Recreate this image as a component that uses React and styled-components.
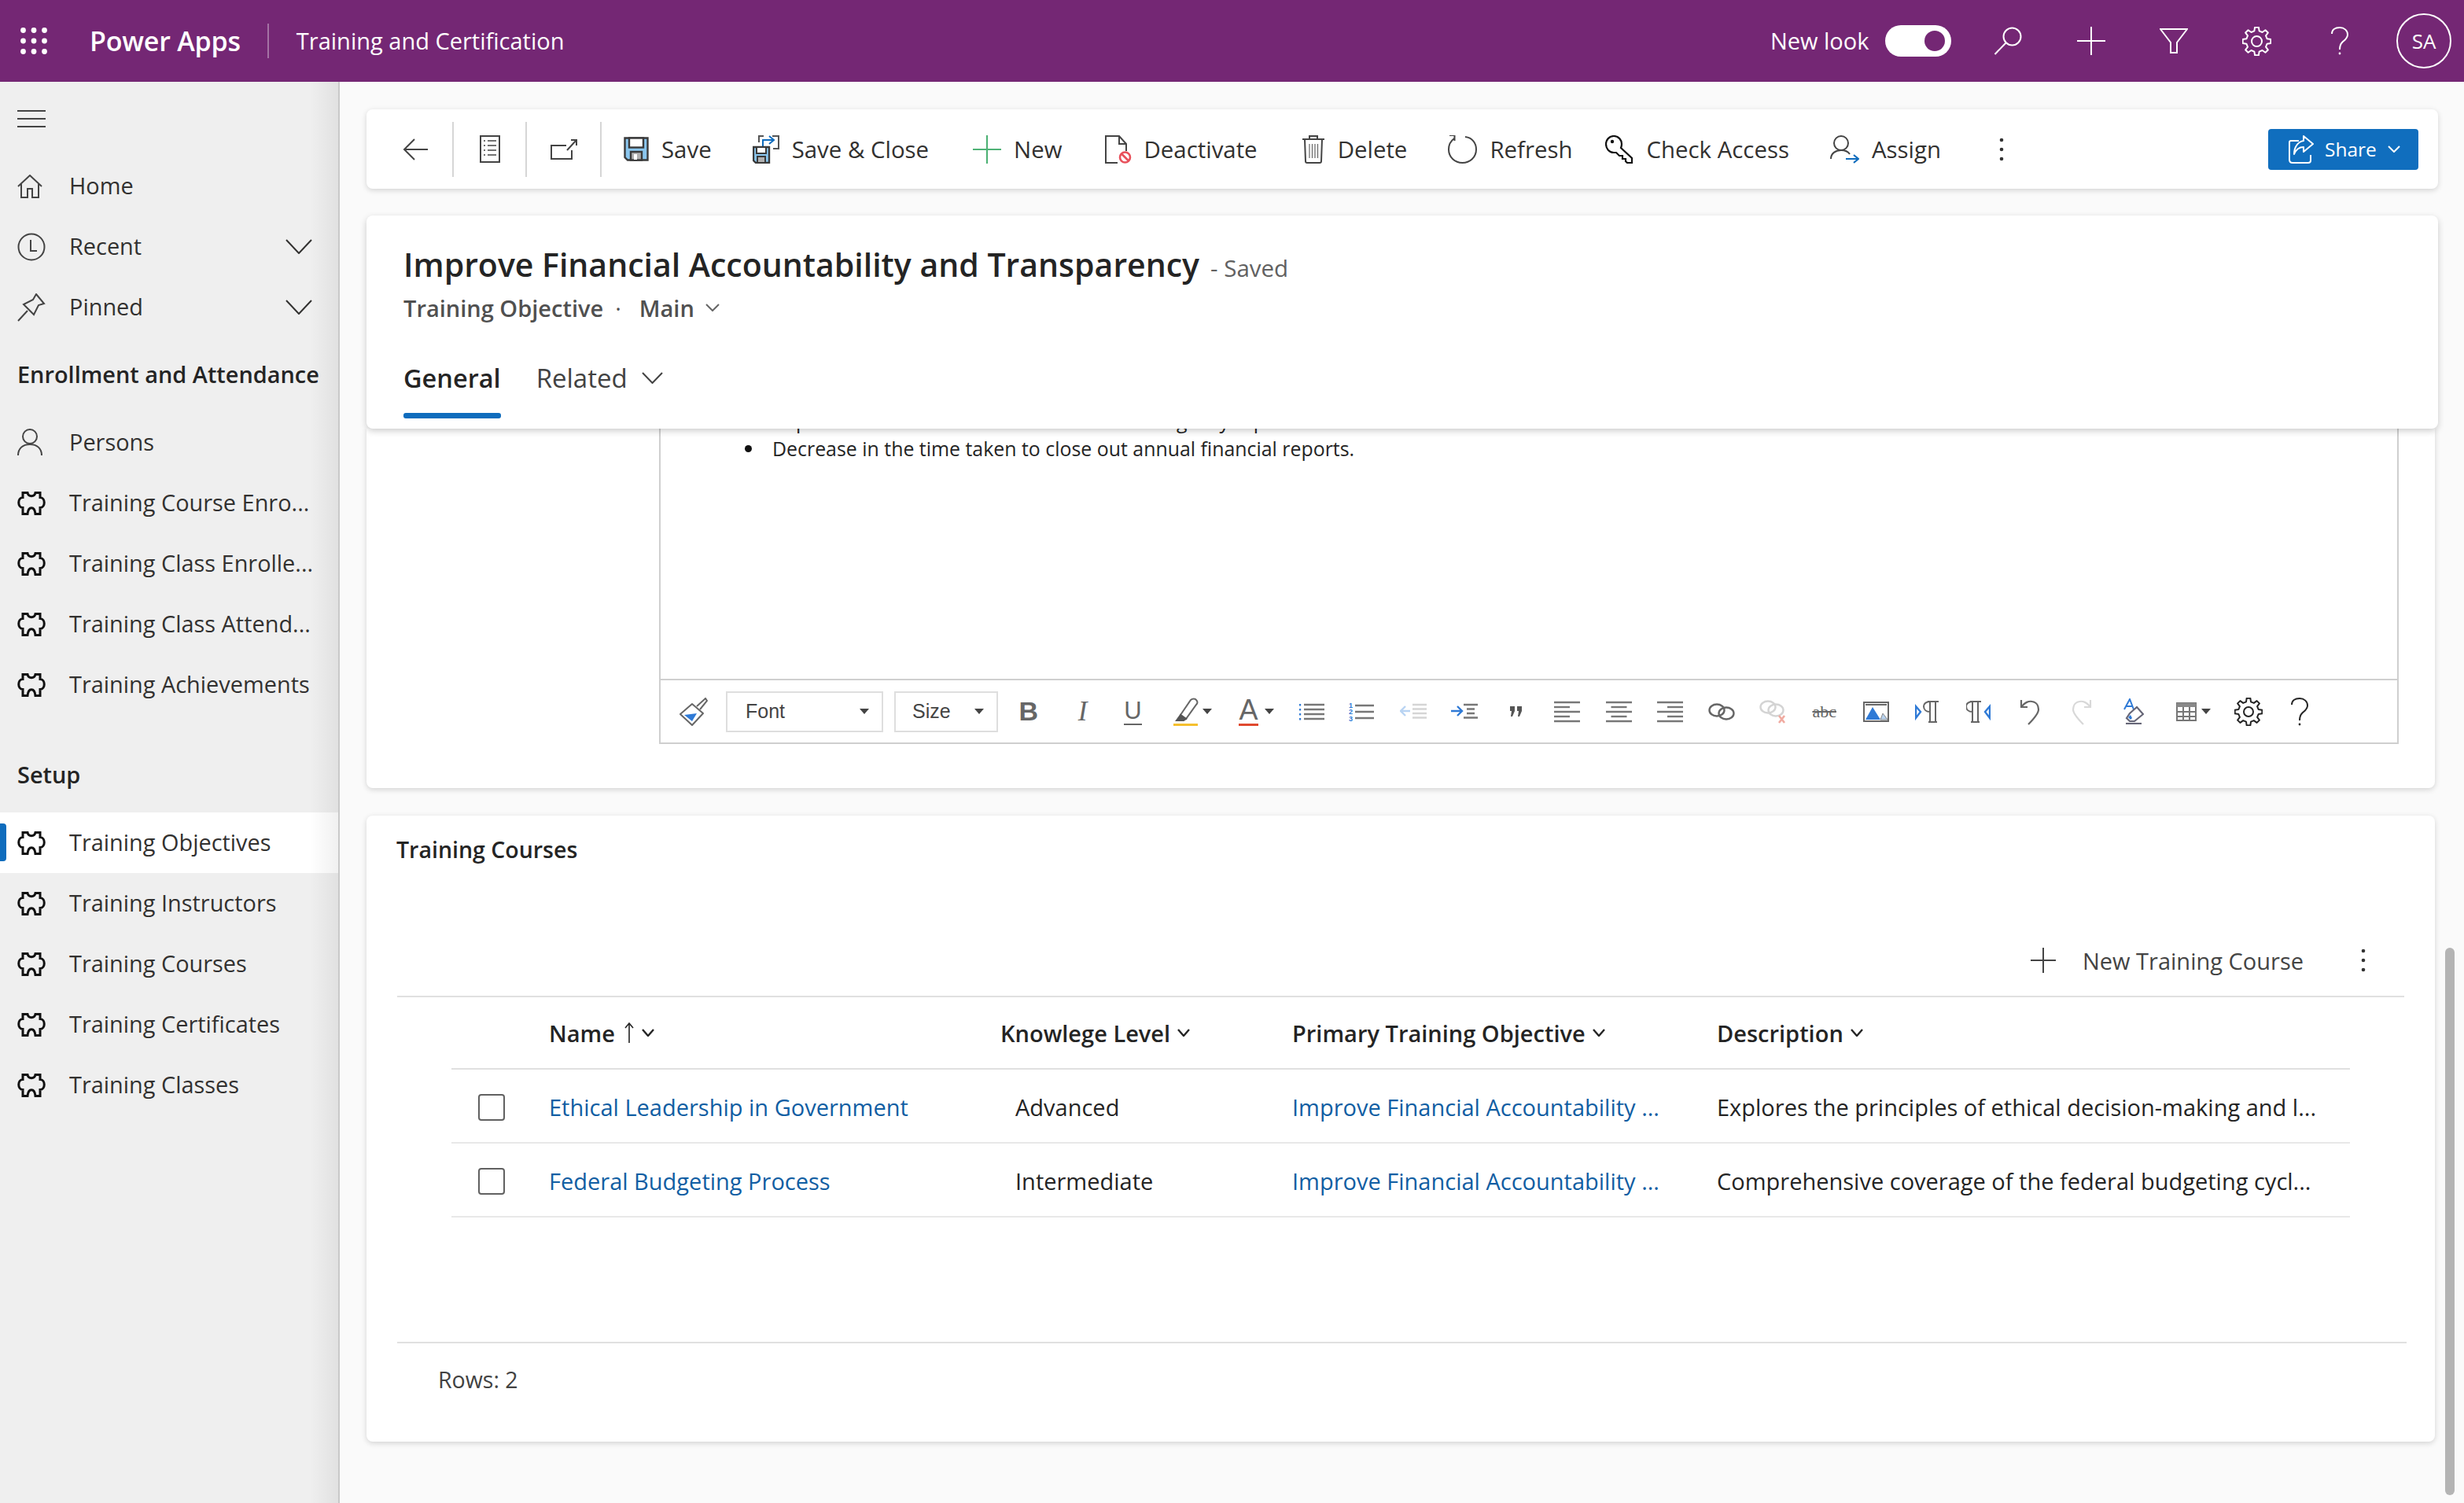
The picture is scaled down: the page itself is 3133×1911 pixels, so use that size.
import styled, { createGlobalStyle } from "styled-components";

const GlobalStyle = createGlobalStyle`
  html, body { margin: 0; padding: 0; height: 100%; }
  body {
    font-family: "Open Sans", "Noto Sans", Arial, sans-serif;
    background: #fafafa;
    color: #242424;
    overflow: hidden;
  }
  * { box-sizing: border-box; }
  #root { height: 100%; }
`;

const gearPath = (cx, cy, outer, inner, teeth) => {
  const step = (Math.PI * 2) / teeth;
  const pts = [];
  for (let i = 0; i < teeth; i++) {
    const a = i * step;
    [[inner, -0.3], [outer, -0.17], [outer, 0.17], [inner, 0.3]].forEach(([r, k]) => {
      pts.push(`${(cx + r * Math.cos(a + k * step)).toFixed(2)} ${(cy + r * Math.sin(a + k * step)).toFixed(2)}`);
    });
  }
  return `M${pts.join(" L")} Z`;
};

const Svg = ({ w, h, sw = 2, children }) => (
  <svg width={w} height={h} viewBox={`0 0 ${w} ${h}`} fill="none" stroke="currentColor" strokeWidth={sw} style={{ display: "block", flexShrink: 0 }}>
    {children}
  </svg>
);

const Waffle = () => (
  <svg width="34" height="34" viewBox="0 0 34 34" fill="#fff" style={{ display: "block" }}>
    {[3.5, 17, 30.5].map((y) => [3.5, 17, 30.5].map((x) => <circle key={`${x}-${y}`} cx={x} cy={y} r="3.4" />))}
  </svg>
);
const SearchIcon = () => <Svg w={36} h={36}><circle cx="23.5" cy="12.5" r="11" /><path d="M15.5 20.5 L1.5 35" /></Svg>;
const PlusIcon = ({ s = 36 }) => <Svg w={s} h={s}><path d={`M${s / 2} 0 V${s} M0 ${s / 2} H${s}`} /></Svg>;
const FilterIcon = () => <Svg w={36} h={32}><path d="M1 1 H35 L22 18 V31 H14 V18 Z" /></Svg>;
const GearIcon = ({ s = 37 }) => (
  <Svg w={s} h={s}>
    <path d={gearPath(s / 2, s / 2, s / 2 - 0.5, s / 2 - 5, 8)} strokeLinejoin="round" />
    <circle cx={s / 2} cy={s / 2} r={s / 2 - 12} />
  </Svg>
);
const HelpIcon = () => (
  <Svg w={24} h={36}>
    <path d="M2 9 C2 4 6 1 12 1 C18 1 22 5 22 10 C22 15 18 17 15 20 C13 22 12 24 12 29" />
    <circle cx="12" cy="34" r="1.4" fill="currentColor" stroke="none" />
  </Svg>
);

const Hamburger = () => <Svg w={36} h={22}><path d="M0 1 H36 M0 11 H36 M0 21 H36" /></Svg>;
const HomeIcon = () => <Svg w={32} h={30}><path d="M1 15 L16 1 L31 15 M5 12 V29 H13 V18 H19 V29 H27 V12" /></Svg>;
const ClockIcon = () => <Svg w={36} h={36}><circle cx="18" cy="18" r="16.5" /><path d="M17 9 V23 H25" /></Svg>;
const PinIcon = () => <Svg w={36} h={36}><path d="M24 1 L34 13 L27 15 L21 27 L8 14 L20 8 Z M13 22 L1 35" /></Svg>;
const Chevron = ({ w = 34, h = 19, sw = 2 }) => <Svg w={w} h={h} sw={sw}><path d={`M1 1 L${w / 2} ${h - 1} L${w - 1} 1`} /></Svg>;
const PersonIcon = () => <Svg w={32} h={35}><circle cx="16" cy="10" r="9" /><path d="M1 34 C1 25 7 20 16 20 C25 20 31 25 31 34" /></Svg>;
const PuzzleIcon = () => (
  <Svg w={36} h={30} sw={3}>
    <path d="M7 1.5 H13 C14 7 22 7 23 1.5 H29 V7.5 C36 7.5 36 20.5 29 20.5 V28.5 H23 C22 18 14 18 13 28.5 H7 V20.5 C0 20.5 0 7.5 7 7.5 Z" strokeLinejoin="miter" />
  </Svg>
);

const BackIcon = () => <Svg w={32} h={28}><path d="M15 1 L2 14 L15 27 M2 14 H32" /></Svg>;
const FormIcon = () => (
  <Svg w={26} h={35}>
    <rect x="1" y="1" width="24" height="33" />
    <path d="M5 7 H7 M10 7 H21 M5 13 H7 M10 13 H21 M5 19 H7 M10 19 H21 M5 25 H7 M10 25 H21" strokeWidth="1.5" />
  </Svg>
);
const PopoutIcon = () => <Svg w={34} h={26}><path d="M20 8 H1 V25 H27 V14 M21 14 L33 1 M26 1 H33 V8" /></Svg>;
const SaveIcon = () => (
  <Svg w={32} h={31} sw={2.4}>
    <path d="M1.5 1.5 H30.5 V29.5 H5 L1.5 26 Z" fill="#8ac6ee" stroke="#3a3a3a" />
    <rect x="7" y="1.5" width="18" height="12" fill="#fff" stroke="#3a3a3a" />
    <rect x="9" y="19" width="14" height="10.5" fill="#b0b0b0" stroke="#3a3a3a" />
    <rect x="13" y="22" width="4" height="7" fill="#fff" stroke="none" />
  </Svg>
);
const SaveCloseIcon = () => (
  <Svg w={34} h={36} sw={2}>
    <path d="M8 9 V1 H14 M25 1 H33 V17 H26" stroke="#555" />
    <path d="M13 14 V6 H26 M21 1 L27 6 L21 11" stroke="#0f6cbd" />
    <path d="M1 15 H21 V35 H4 L1 32 Z" fill="#8ac6ee" stroke="#3a3a3a" strokeWidth="2.4" />
    <rect x="5" y="15" width="12" height="8" fill="#fff" stroke="#3a3a3a" />
    <rect x="6" y="27" width="10" height="8" fill="#b0b0b0" stroke="#3a3a3a" />
  </Svg>
);
const NewIcon = () => <Svg w={36} h={36} sw={2.2}><path d="M18 0 V36 M0 18 H36" stroke="#4fb276" /></Svg>;
const DeactivateIcon = () => (
  <Svg w={34} h={36} sw={2}>
    <path d="M16 35 H1 V1 H18 L27 11 V20 M18 1 V11 H27" stroke="#444" />
    <circle cx="25.5" cy="28" r="6.5" stroke="#e8505b" strokeWidth="2.6" fill="#fff" />
    <path d="M21 23.5 L30 32.5" stroke="#e8505b" strokeWidth="2.6" />
  </Svg>
);
const DeleteIcon = () => (
  <Svg w={30} h={36} sw={2}>
    <path d="M1 5 H29 M10 5 V1 H20 V5 M4 5 L5 33 C5 34 6 35 7 35 H23 C24 35 25 34 25 33 L26 5" stroke="#444" />
    <path d="M10 11 V29 M13.5 11 V29 M17 11 V29 M20.5 11 V29" strokeWidth="1.2" stroke="#666" />
  </Svg>
);
const RefreshIcon = () => <Svg w={37} h={36}><path d="M22 2 C31 3 36 10 36 18 C36 28 28 35 18.5 35 C9 35 1 28 1 18 C1 12 4 7 8 4 M2 0 H8.5 V7" stroke="#444" /></Svg>;
const KeyIcon = () => (
  <Svg w={36} h={36} sw={2.2}>
    <path d="M11 1 C17 1 21 6 21 11 C21 13 20.5 15 20 16 L34 29 V35 H28 L26 33 V30 H22 V26 H18 L14 22 C13 22 12 22 11 22 C5 22 1 17 1 11 C1 6 5 1 11 1 Z" stroke="#111" />
    <circle cx="9" cy="8" r="2.2" fill="#111" stroke="none" />
  </Svg>
);
const AssignIcon = () => (
  <Svg w={37} h={36}>
    <circle cx="14" cy="10" r="9" stroke="#444" />
    <path d="M1 30 C1 23 7 19 14 19 C19 19 23 21 25 24" stroke="#444" />
    <path d="M20 30 H35 M30 25 L36 30 L30 35" stroke="#0f6cbd" strokeWidth="2.2" />
  </Svg>
);
const DotsIcon = () => (
  <svg width="6" height="30" viewBox="0 0 6 30" fill="#333" style={{ display: "block", flexShrink: 0 }}>
    <circle cx="3" cy="3" r="2.3" /><circle cx="3" cy="15" r="2.3" /><circle cx="3" cy="27" r="2.3" />
  </svg>
);
const ShareIcon = () => (
  <Svg w={32} h={36}>
    <path d="M13 7 H3 Q1 7 1 9 V31 Q1 35 5 35 H25 Q28 35 28 32 V25" />
    <path d="M19 1 L31 11 L19 21 V15 C13 15 9 19 7 24 C7 15 12 8 19 7 Z" strokeLinejoin="round" />
  </Svg>
);

const BrushIcon = () => (
  <Svg w={36} h={36} sw={2}>
    <path d="M22 11 L33 1 L35 4 L26 15" stroke="#666" />
    <path d="M16 8 L30 20 L16 35 L1 21 Z" fill="#fff" stroke="#666" strokeLinejoin="round" />
    <path d="M6 22 L22 20 L16 30 Z" fill="#2f7ad6" stroke="none" />
  </Svg>
);
const HighlightIcon = () => (
  <Svg w={32} h={36}>
    <path d="M9 22 L22 3 C24 1 28 1 29 3 C31 5 31 7 29 9 L16 27 Z" stroke="#666" />
    <path d="M9 22 L4 29 H13 L16 27 Z" fill="#555" stroke="#555" />
    <path d="M0 34.5 H31" stroke="#f5c02e" strokeWidth="3" />
  </Svg>
);
const Caret = styled.i`
  display: block;
  width: 0;
  height: 0;
  margin-left: ${(p) => p.$gap || 6}px;
  border-left: 6px solid transparent;
  border-right: 6px solid transparent;
  border-top: 7px solid #444;
`;
const LinesIcon = ({ align = "left", widths = [33, 20, 33, 20, 33], c = "#777", w = 33 }) => (
  <Svg w={w} h={28} sw={2.4}>
    {widths.map((lw, i) => {
      const x = align === "left" ? 0 : align === "right" ? w - lw : (w - lw) / 2;
      return <path key={i} d={`M${x} ${2 + i * 6} H${x + lw}`} stroke={c} />;
    })}
  </Svg>
);
const BulletIcon = () => (
  <Svg w={32} h={22} sw={2.4}>
    <path d="M6 2 H32 M6 8 H32 M6 14 H32 M6 20 H32" stroke="#777" />
    <path d="M1 1 V3.5 M1 7 V9.5 M1 13 V15.5 M1 19 V21.5" stroke="#2f7ad6" />
  </Svg>
);
const NumberIcon = () => (
  <Svg w={32} h={26} sw={2.4}>
    <path d="M8 5 H32 M8 13 H32 M8 21 H32" stroke="#777" />
    <g fill="#2f7ad6" stroke="none" fontSize="9" fontFamily="Liberation Sans, Arial, sans-serif" fontWeight="700">
      <text x="0" y="8">1</text>
      <text x="0" y="16">2</text>
      <text x="0" y="25">3</text>
    </g>
  </Svg>
);
const OutdentIcon = () => (
  <Svg w={34} h={21} sw={2.4}>
    <path d="M16 2 H34 M16 7.5 H34 M16 13 H34 M16 18.5 H34" stroke="#d5d5d5" />
    <path d="M1 10 H13 M7 4 L1 10 L7 16" stroke="#b9d4f3" />
  </Svg>
);
const IndentIcon = () => (
  <Svg w={34} h={21} sw={2.4}>
    <path d="M16 2 H34 M20 7.5 H30 M20 13 H30 M16 18.5 H34" stroke="#777" />
    <path d="M0 10 H13 M8 4 L14 10 L8 16" stroke="#2f7ad6" />
  </Svg>
);
const QuoteIcon = () => (
  <svg width="15" height="13" viewBox="0 0 15 13" fill="#555" style={{ display: "block" }}>
    <path d="M0 0 H6 V6 L3 13 H1 L2 6 H0 Z M9 0 H15 V6 L12 13 H10 L11 6 H9 Z" />
  </svg>
);
const LinkIcon = () => (
  <Svg w={34} h={22} sw={2.4}>
    <ellipse cx="11" cy="9" rx="9.5" ry="7.5" stroke="#666" />
    <ellipse cx="23" cy="13" rx="9.5" ry="7.5" stroke="#666" />
  </Svg>
);
const UnlinkIcon = () => (
  <Svg w={34} h={30} sw={2.4}>
    <ellipse cx="11" cy="9" rx="9.5" ry="7.5" stroke="#d4d4d4" />
    <ellipse cx="21" cy="13" rx="9.5" ry="7.5" stroke="#d4d4d4" />
    <path d="M25 20 L32 29 M32 20 L25 29" stroke="#f0aaa0" strokeWidth="2.6" />
  </Svg>
);
const ImageIcon = () => (
  <Svg w={33} h={26}>
    <rect x="1" y="1" width="31" height="24" stroke="#666" fill="#fff" />
    <path d="M3 23 L12 7 L22 23 Z" fill="#2f7ad6" stroke="none" />
    <path d="M22 23 L25 15 L31 23 Z" fill="#b8d3f0" stroke="#888" strokeWidth="1" />
    <path d="M3 4 H30" stroke="#666" />
  </Svg>
);
const PilcrowStem = ({ x }) => (
  <path transform={`translate(${x} 0)`} d="M8 1 H22 M11 1 V27 M18 1 V27 M9 27 H20 M11 14 C6 14 3 11 3 7 C3 4 6 1 11 1" stroke="#666" />
);
const PilcrowIcon = ({ rtl }) => (
  <Svg w={31} h={28}>
    {rtl ? <PilcrowStem x={-3} /> : <PilcrowStem x={8} />}
    <path d={rtl ? "M30 7 L24 14 L30 22 Z" : "M1 7 L7 14 L1 22 Z"} stroke="#2f7ad6" strokeWidth="2.4" />
  </Svg>
);
const UndoIcon = ({ c = "#666", flip }) => (
  <Svg w={26} h={34} sw={2.2}>
    <g transform={flip ? "translate(26 0) scale(-1 1)" : undefined}>
      <path d="M2 11 C6 5 12 3 16 4 C22 5 24 10 24 14 C24 20 16 28 11 33 M2 2 V11 H10" stroke={c} />
    </g>
  </Svg>
);
const EraserIcon = () => (
  <Svg w={28} h={33}>
    <path d="M3 14 L10 1 L15 14 M5 10 H13" stroke="#2f7ad6" />
    <path d="M10 19 L19 11 L27 20 L16 29 H10 L6 25 Z" stroke="#667" fill="#fff" strokeWidth="2.2" />
    <path d="M8 24 L11 21 L13 25 L11 27 Z" fill="#2f7ad6" stroke="none" />
    <path d="M5 32 H25" stroke="#667" strokeWidth="2.2" />
  </Svg>
);
const TableIcon = () => (
  <Svg w={26} h={24}>
    <rect x="1" y="1" width="24" height="22" stroke="#777" />
    <rect x="1" y="1" width="24" height="5" fill="#888" stroke="none" />
    <path d="M9 6 V23 M17 6 V23 M1 12 H25 M1 18 H25" stroke="#777" />
  </Svg>
);
const SortArrow = () => <Svg w={12} h={26} sw={1.6}><path d="M6 1 V26 M1 7 L6 1 L11 7" /></Svg>;

const Page = styled.div`
  height: 1911px;
  display: flex;
  flex-direction: column;
  overflow: hidden;
`;

const TopBar = styled.header`
  height: 104px;
  flex-shrink: 0;
  background: #742774;
  color: #fff;
  display: flex;
  align-items: center;
  padding: 0 16px 0 26px;
`;

const AppName = styled.div`
  margin-left: 54px;
  font-size: 34px;
  font-weight: 600;
  letter-spacing: -0.2px;
`;

const TopDivider = styled.div`
  width: 2px;
  height: 44px;
  margin: 0 35px 0 34px;
  background: rgba(255, 255, 255, 0.35);
`;

const AppTitle = styled.div`
  padding-bottom: 2px;
  font-size: 29px;
`;

const NewLook = styled.div`
  margin-left: auto;
  padding-bottom: 2px;
  font-size: 29px;
`;

const Toggle = styled.div`
  position: relative;
  width: 84px;
  height: 40px;
  margin: 0 20px;
  border-radius: 20px;
  background: #fff;

  &::after {
    content: "";
    position: absolute;
    top: 7px;
    right: 8px;
    width: 26px;
    height: 26px;
    border-radius: 50%;
    background: #742774;
  }
`;

const TopButton = styled.div`
  width: 105.5px;
  display: flex;
  justify-content: center;
`;

const Avatar = styled.div`
  width: 70px;
  height: 70px;
  margin-left: 19px;
  border: 2px solid #fff;
  border-radius: 50%;
  display: flex;
  align-items: center;
  justify-content: center;
  font-size: 26px;
`;

const Body = styled.div`
  flex: 1;
  display: flex;
  min-height: 0;
`;

const Sidebar = styled.nav`
  position: relative;
  width: 432px;
  flex-shrink: 0;
  background: #efefef;
  border-right: 2px solid #c9c9c9;

  &::after {
    content: "";
    position: absolute;
    top: 0;
    bottom: 0;
    right: 0;
    width: 36px;
    background: linear-gradient(to right, rgba(0, 0, 0, 0), rgba(0, 0, 0, 0.06));
    pointer-events: none;
  }
`;

const HamburgerRow = styled.div`
  height: 94px;
  padding-left: 22px;
  display: flex;
  align-items: center;
  color: #444;
`;

const NavRow = styled.div`
  position: relative;
  height: 77px;
  padding: 0 33px 0 22px;
  display: flex;
  align-items: center;
  font-size: 28.9px;
  color: #323130;
  background: ${(p) => (p.$active ? "#fff" : "transparent")};

  ${(p) =>
    p.$active &&
    `&::before {
      content: "";
      position: absolute;
      left: 0;
      top: 14px;
      width: 8px;
      height: 48px;
      border-radius: 0 4px 4px 0;
      background: #0f6cbd;
    }`}
`;

const NavIcon = styled.span`
  width: 66px;
  flex-shrink: 0;
  color: ${(p) => (p.$dark ? "#111" : "#444")};
`;

const NavLabel = styled.span`
  flex: 1;
  padding-bottom: 2px;
  white-space: nowrap;
`;

const NavHeading = styled.div`
  height: 95px;
  margin-top: ${(p) => p.$offset || 0}px;
  padding: 0 0 2px 22px;
  display: flex;
  align-items: center;
  font-size: 28.9px;
  font-weight: 600;
  color: #242424;
  white-space: nowrap;
`;

const Main = styled.main`
  flex: 1;
  min-width: 0;
  position: relative;
  padding-left: 34px;
  display: flex;
  flex-direction: column;
`;

const CommandBar = styled.div`
  width: 2634px;
  height: 101px;
  margin-top: 35px;
  flex-shrink: 0;
  display: flex;
  align-items: center;
  background: #fff;
  border-radius: 8px;
  box-shadow: 0 2px 7px rgba(0, 0, 0, 0.16);
`;

const NavCell = styled.div`
  width: ${(p) => p.$w}px;
  padding-left: ${(p) => p.$pad || 0}px;
  display: flex;
  justify-content: ${(p) => (p.$pad ? "flex-start" : "center")};
  color: #444;
`;

const CmdSeparator = styled.div`
  width: 2px;
  height: 70px;
  background: #d6d6d6;
`;

const CommandList = styled.div`
  margin-left: 28px;
  display: flex;
  align-items: center;
  gap: 52px;
`;

const Command = styled.div`
  margin-left: ${(p) => p.$shift || 0}px;
  display: flex;
  align-items: center;
  gap: 16px;
  font-size: 29.4px;
  color: #323130;
  white-space: nowrap;
`;

const MoreDots = styled.div`
  margin-left: 22px;
`;

const ShareButton = styled.div`
  width: 191px;
  height: 52px;
  margin: 0 25px 0 auto;
  padding-left: 26px;
  display: flex;
  align-items: center;
  gap: 14px;
  background: #106ebe;
  color: #fff;
  border-radius: 4px;
  font-size: 24.5px;
`;

const HeaderCard = styled.section`
  position: relative;
  z-index: 3;
  width: 2634px;
  height: 271px;
  margin-top: 34px;
  flex-shrink: 0;
  padding: 32px 0 0 47px;
  background: #fff;
  border-radius: 8px;
  box-shadow: 0 3px 9px rgba(0, 0, 0, 0.2);
`;

const TitleRow = styled.div`
  height: 60px;
  display: flex;
  align-items: center;
  gap: 14px;
`;

const Title = styled.h1`
  margin: 0;
  font-size: 41px;
  font-weight: 600;
  color: #242424;
  white-space: nowrap;
`;

const SavedTag = styled.span`
  margin-top: 8px;
  font-size: 29.5px;
  color: #616161;
`;

const SubRow = styled.div`
  height: 44px;
  margin-top: 3px;
  display: flex;
  align-items: center;
  font-size: 29px;
  font-weight: 600;
  color: #505050;
`;

const SubDot = styled.span`
  margin: 0 23px 0 15px;
  font-weight: 400;
`;

const MainChevron = styled.span`
  margin-left: 14px;
  color: #666;
`;

const Tabs = styled.div`
  margin-top: 25px;
  display: flex;
  gap: 45px;
`;

const Tab = styled.div`
  position: relative;
  height: 94px;
  padding-bottom: 10px;
  display: flex;
  align-items: center;
  gap: 18px;
  font-size: ${(p) => (p.$active ? 32.5 : 33)}px;
  font-weight: ${(p) => (p.$active ? 600 : 400)};
  color: ${(p) => (p.$active ? "#242424" : "#424242")};

  ${(p) =>
    p.$active &&
    `&::after {
      content: "";
      position: absolute;
      left: 0;
      right: 0;
      bottom: 0;
      height: 7px;
      border-radius: 3px;
      background: #0f6cbd;
    }`}
`;

const ScrollRegion = styled.div`
  flex: 1;
  min-height: 0;
  overflow: hidden;
  margin-left: -34px;
  padding-left: 34px;
`;

const EditorCard = styled.section`
  width: 2630px;
  height: 457px;
  background: #fff;
  border-radius: 0 0 8px 8px;
  box-shadow: 0 2px 7px rgba(0, 0, 0, 0.16);
`;

const EditorFrame = styled.div`
  width: 2212px;
  height: 401px;
  margin-left: 372px;
  display: flex;
  flex-direction: column;
  border: 2px solid #cfcfcf;
  border-top: none;
`;

const EditorBody = styled.div`
  flex: 1;
  min-height: 0;
  overflow: hidden;
  font-size: 24.9px;
  line-height: 35px;
  color: #242424;
`;

const BulletList = styled.ul`
  list-style: none;
  margin: -27px 0 0;
  padding: 0 0 0 142px;
`;

const Bullet = styled.li`
  position: relative;
  white-space: nowrap;

  &::before {
    content: "";
    position: absolute;
    left: -35px;
    top: 13px;
    width: 9px;
    height: 9px;
    border-radius: 50%;
    background: #111;
  }
`;

const EditorToolbar = styled.div`
  height: 81px;
  flex-shrink: 0;
  padding-left: 24px;
  display: flex;
  align-items: center;
  border-top: 2px solid #cfcfcf;
`;

const SelectBox = styled.div`
  width: ${(p) => p.$w}px;
  height: 52px;
  margin-left: ${(p) => p.$gap}px;
  padding: 0 16px 0 ${(p) => p.$pad}px;
  display: flex;
  align-items: center;
  justify-content: space-between;
  border: 2px solid #dedede;
  font-family: "Liberation Sans", Arial, sans-serif;
  font-size: 25px;
  color: #444;
`;

const ToolCell = styled.div`
  width: ${(p) => p.$w || 65.4}px;
  flex-shrink: 0;
  display: flex;
  align-items: center;
  justify-content: center;
`;

const BoldGlyph = styled.span`
  font-family: "Liberation Sans", Arial, sans-serif;
  font-size: 34px;
  font-weight: 700;
  color: #666;
`;

const ItalicGlyph = styled.span`
  font-family: "Liberation Serif", serif;
  font-size: 35px;
  font-style: italic;
  color: #666;
`;

const UnderGlyph = styled.span`
  font-family: "Liberation Sans", Arial, sans-serif;
  font-size: 31px;
  line-height: 32px;
  color: #666;
  border-bottom: 2px solid #666;
`;

const FontColorGlyph = styled.span`
  font-family: "Liberation Sans", Arial, sans-serif;
  font-size: 36px;
  line-height: 34px;
  color: #666;
  border-bottom: 3px solid #e0492f;
`;

const StrikeGlyph = styled.span`
  font-family: "Liberation Serif", serif;
  font-size: 22px;
  color: #666;
  text-decoration: line-through;
`;

const CoursesCard = styled.section`
  width: 2630px;
  height: 796px;
  margin-top: 35px;
  padding: 23px 0 0 38px;
  background: #fff;
  border-radius: 8px;
  box-shadow: 0 2px 7px rgba(0, 0, 0, 0.16);
`;

const SectionTitle = styled.h2`
  margin: 0;
  font-size: 28.5px;
  line-height: 40px;
  font-weight: 600;
  color: #242424;
`;

const GridWrap = styled.div`
  width: 2552px;
  margin-left: 1px;
`;

const ActionBar = styled.div`
  height: 92px;
  margin-top: 76px;
  padding-right: 49px;
  display: flex;
  align-items: center;
  justify-content: flex-end;
  border-bottom: 2px solid #e0e0e0;
  color: #444;
  font-size: 29px;
`;

const ActionLabel = styled.span`
  margin: 0 73px 0 34px;
`;

const Grid = styled.div`
  width: 2414px;
  margin-left: 69px;
`;

const GridRow = styled.div`
  display: grid;
  grid-template-columns: 124px 574px 371px 540px 1fr;
  align-items: center;
  height: ${(p) => (p.$head ? 92 : 94)}px;
  border-bottom: 2px solid ${(p) => (p.$head ? "#e0e0e0" : "#e8e8e8")};
  font-size: 29px;
  white-space: nowrap;
`;

const HeadCell = styled.div`
  display: flex;
  align-items: center;
  gap: 9px;
  font-weight: 600;
  color: #242424;
`;

const Cell = styled.div`
  padding: 3px 0 0 ${(p) => p.$pad || 0}px;
  color: ${(p) => (p.$link ? "#115ea3" : "#242424")};
`;

const Checkbox = styled.div`
  width: 34px;
  height: 34px;
  margin: 3px 0 0 34px;
  border: 2px solid #616161;
  border-radius: 4px;
`;

const SortSlot = styled.span`
  margin: 0 1px 0 3px;
`;

const GridFooter = styled.div`
  margin-top: 158px;
  width: 2555px;
  padding-left: 52px;
  line-height: 92px;
  border-top: 2px solid #e0e0e0;
  font-size: 28.5px;
  color: #424242;
`;

const Scrollbar = styled.div`
  position: absolute;
  top: 1101px;
  right: 12px;
  width: 12px;
  height: 696px;
  border-radius: 6px;
  background: #b4b4b4;
`;

const primaryNav = [
  { label: "Home", icon: <HomeIcon /> },
  { label: "Recent", icon: <ClockIcon />, more: true },
  { label: "Pinned", icon: <PinIcon />, more: true },
];
const enrollment = ["Training Course Enro...", "Training Class Enrolle...", "Training Class Attend...", "Training Achievements"];
const setup = ["Training Objectives", "Training Instructors", "Training Courses", "Training Certificates", "Training Classes"];

const commands = [
  { label: "Save", icon: <SaveIcon /> },
  { label: "Save & Close", icon: <SaveCloseIcon /> },
  { label: "New", icon: <NewIcon />, shift: 4 },
  { label: "Deactivate", icon: <DeactivateIcon />, shift: 2 },
  { label: "Delete", icon: <DeleteIcon />, shift: 4 },
  { label: "Refresh", icon: <RefreshIcon /> },
  { label: "Check Access", icon: <KeyIcon />, shift: -10 },
  { label: "Assign", icon: <AssignIcon /> },
];

const courses = [
  {
    name: "Ethical Leadership in Government",
    level: "Advanced",
    objective: "Improve Financial Accountability ...",
    description: "Explores the principles of ethical decision-making and l...",
  },
  {
    name: "Federal Budgeting Process",
    level: "Intermediate",
    objective: "Improve Financial Accountability ...",
    description: "Comprehensive coverage of the federal budgeting cycl...",
  },
];

const columns = [
  { label: "Name", sort: true },
  { label: "Knowlege Level" },
  { label: "Primary Training Objective" },
  { label: "Description" },
];

export default function App() {
  return (
    <Page>
      <GlobalStyle />
      <TopBar>
        <Waffle />
        <AppName>Power Apps</AppName>
        <TopDivider />
        <AppTitle>Training and Certification</AppTitle>
        <NewLook>New look</NewLook>
        <Toggle />
        <TopButton><SearchIcon /></TopButton>
        <TopButton><PlusIcon /></TopButton>
        <TopButton><FilterIcon /></TopButton>
        <TopButton><GearIcon /></TopButton>
        <TopButton><HelpIcon /></TopButton>
        <Avatar>SA</Avatar>
      </TopBar>
      <Body>
        <Sidebar>
          <HamburgerRow><Hamburger /></HamburgerRow>
          {primaryNav.map((item) => (
            <NavRow key={item.label}>
              <NavIcon>{item.icon}</NavIcon>
              <NavLabel>{item.label}</NavLabel>
              {item.more && <Chevron />}
            </NavRow>
          ))}
          <NavHeading>Enrollment and Attendance</NavHeading>
          <NavRow>
            <NavIcon><PersonIcon /></NavIcon>
            <NavLabel>Persons</NavLabel>
          </NavRow>
          {enrollment.map((label) => (
            <NavRow key={label}>
              <NavIcon $dark><PuzzleIcon /></NavIcon>
              <NavLabel>{label}</NavLabel>
            </NavRow>
          ))}
          <NavHeading $offset={29}>Setup</NavHeading>
          {setup.map((label, i) => (
            <NavRow key={label} $active={i === 0}>
              <NavIcon $dark><PuzzleIcon /></NavIcon>
              <NavLabel>{label}</NavLabel>
            </NavRow>
          ))}
        </Sidebar>
        <Main>
          <CommandBar>
            <NavCell $w={109} $pad={46}><BackIcon /></NavCell>
            <CmdSeparator />
            <NavCell $w={91}><FormIcon /></NavCell>
            <CmdSeparator />
            <NavCell $w={93}><PopoutIcon /></NavCell>
            <CmdSeparator />
            <CommandList>
              {commands.map((cmd) => (
                <Command key={cmd.label} $shift={cmd.shift}>
                  {cmd.icon}
                  <span>{cmd.label}</span>
                </Command>
              ))}
              <MoreDots><DotsIcon /></MoreDots>
            </CommandList>
            <ShareButton>
              <ShareIcon />
              <span>Share</span>
              <Chevron w={16} h={9} />
            </ShareButton>
          </CommandBar>
          <HeaderCard>
            <TitleRow>
              <Title>Improve Financial Accountability and Transparency</Title>
              <SavedTag>- Saved</SavedTag>
            </TitleRow>
            <SubRow>
              <span>Training Objective</span>
              <SubDot>·</SubDot>
              <span>Main</span>
              <MainChevron><Chevron w={18} h={10} /></MainChevron>
            </SubRow>
            <Tabs>
              <Tab $active>General</Tab>
              <Tab>
                Related
                <Chevron w={27} h={15} />
              </Tab>
            </Tabs>
          </HeaderCard>
          <ScrollRegion>
            <EditorCard>
              <EditorFrame>
                <EditorBody>
                  <BulletList>
                    <Bullet>Improved internal controls in latest annual agency reports.</Bullet>
                    <Bullet>Decrease in the time taken to close out annual financial reports.</Bullet>
                  </BulletList>
                </EditorBody>
                <EditorToolbar>
                  <BrushIcon />
                  <SelectBox $w={200} $gap={23} $pad={23}>Font<Caret /></SelectBox>
                  <SelectBox $w={132} $gap={14} $pad={21}>Size<Caret /></SelectBox>
                  <ToolCell $w={77.5}><BoldGlyph>B</BoldGlyph></ToolCell>
                  <ToolCell $w={60}><ItalicGlyph>I</ItalicGlyph></ToolCell>
                  <ToolCell $w={68}><UnderGlyph>U</UnderGlyph></ToolCell>
                  <ToolCell $w={84}><HighlightIcon /><Caret $gap={5} /></ToolCell>
                  <ToolCell $w={78}><FontColorGlyph>A</FontColorGlyph><Caret $gap={8} /></ToolCell>
                  <ToolCell $w={62}><BulletIcon /></ToolCell>
                  <ToolCell><NumberIcon /></ToolCell>
                  <ToolCell><OutdentIcon /></ToolCell>
                  <ToolCell><IndentIcon /></ToolCell>
                  <ToolCell><QuoteIcon /></ToolCell>
                  <ToolCell><LinesIcon align="left" /></ToolCell>
                  <ToolCell><LinesIcon align="center" /></ToolCell>
                  <ToolCell><LinesIcon align="right" /></ToolCell>
                  <ToolCell><LinkIcon /></ToolCell>
                  <ToolCell><UnlinkIcon /></ToolCell>
                  <ToolCell><StrikeGlyph>abc</StrikeGlyph></ToolCell>
                  <ToolCell><ImageIcon /></ToolCell>
                  <ToolCell><PilcrowIcon /></ToolCell>
                  <ToolCell><PilcrowIcon rtl /></ToolCell>
                  <ToolCell><UndoIcon /></ToolCell>
                  <ToolCell><UndoIcon c="#d8d8d8" flip /></ToolCell>
                  <ToolCell><EraserIcon /></ToolCell>
                  <ToolCell $w={89}><TableIcon /><Caret $gap={6} /></ToolCell>
                  <ToolCell $w={50}><GearIcon s={36} /></ToolCell>
                  <ToolCell $w={80}><HelpIcon /></ToolCell>
                </EditorToolbar>
              </EditorFrame>
            </EditorCard>
            <CoursesCard>
              <SectionTitle>Training Courses</SectionTitle>
              <GridWrap>
                <ActionBar>
                  <PlusIcon s={32} />
                  <ActionLabel>New Training Course</ActionLabel>
                  <DotsIcon />
                </ActionBar>
                <Grid>
                  <GridRow $head>
                    <span />
                    {columns.map((col) => (
                      <HeadCell key={col.label}>
                        {col.label}
                        {col.sort && <SortSlot><SortArrow /></SortSlot>}
                        <Chevron w={16} h={10} sw={2.4} />
                      </HeadCell>
                    ))}
                  </GridRow>
                  {courses.map((course) => (
                    <GridRow key={course.name}>
                      <Checkbox />
                      <Cell $link>{course.name}</Cell>
                      <Cell $pad={19}>{course.level}</Cell>
                      <Cell $link>{course.objective}</Cell>
                      <Cell>{course.description}</Cell>
                    </GridRow>
                  ))}
                </Grid>
                <GridFooter>Rows: 2</GridFooter>
              </GridWrap>
            </CoursesCard>
          </ScrollRegion>
          <Scrollbar />
        </Main>
      </Body>
    </Page>
  );
}
